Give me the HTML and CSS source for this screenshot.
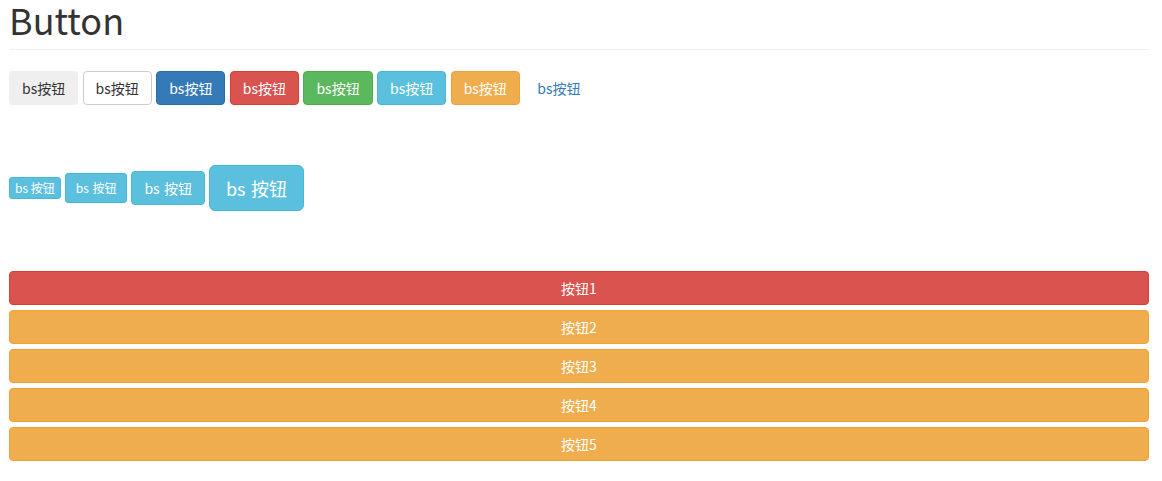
FILE: index.html
```html
<!DOCTYPE html>
<html lang="zh">
<head>
<meta charset="utf-8">
<title>Button</title>
<link rel="stylesheet" href="styles.css">
</head>
<body>
<div class="page">
  <div class="page-header"><h1>Button</h1></div>
  <div class="row row-types">
    <button class="btn">bs按钮</button>
    <button class="btn btn-default">bs按钮</button>
    <button class="btn btn-primary">bs按钮</button>
    <button class="btn btn-danger">bs按钮</button>
    <button class="btn btn-success">bs按钮</button>
    <button class="btn btn-info">bs按钮</button>
    <button class="btn btn-warning">bs按钮</button>
    <button class="btn btn-link">bs按钮</button>
  </div>
  <div class="row row-sizes">
    <button class="btn btn-info btn-xs">bs 按钮</button>
    <button class="btn btn-info btn-sm">bs 按钮</button>
    <button class="btn btn-info">bs 按钮</button>
    <button class="btn btn-info btn-lg">bs 按钮</button>
  </div>
  <div class="blocks">
    <button class="btn btn-danger btn-block">按钮1</button>
    <button class="btn btn-warning btn-block">按钮2</button>
    <button class="btn btn-warning btn-block">按钮3</button>
    <button class="btn btn-warning btn-block">按钮4</button>
    <button class="btn btn-warning btn-block">按钮5</button>
  </div>
</div>
</body>
</html>
```
FILE: styles.css
```css
html, body {
  margin: 0;
  padding: 0;
  background: #fff;
}
body {
  font-family: "Noto Sans CJK SC", "Liberation Sans", sans-serif;
  font-size: 14px;
  line-height: 1.42857;
  color: #333;
}
.page {
  padding: 0 13px 0 9px;
}
.page-header {
  border-bottom: 1px solid #eee;
  padding-bottom: 9px;
}
.page-header h1 {
  margin: 0;
  font-size: 36px;
  font-weight: 400;
  line-height: 39.6px;
  color: #333;
}
.row {
  display: flex;
  align-items: center;
  gap: 4px;
}
.row-types {
  margin-top: 21px;
  gap: 4.4px;
}
.row-sizes {
  margin-top: 60px;
}
.blocks {
  margin-top: 60px;
  display: flex;
  flex-direction: column;
  gap: 5px;
}
.btn {
  display: inline-block;
  font-family: inherit;
  font-size: 14px;
  line-height: 20px;
  padding: 6px 12px;
  border: 1px solid transparent;
  border-radius: 4px;
  background: #efefef;
  color: #333;
  white-space: nowrap;
  text-align: center;
  word-spacing: 0.08em;
  margin: 0;
  cursor: pointer;
}
.btn-default { background: #fff; border-color: #ccc; color: #333; }
.btn-primary { background: #337ab7; border-color: #2e6da4; color: #fff; }
.btn-danger { background: #d9534f; border-color: #d43f3a; color: #fff; }
.btn-success { background: #5cb85c; border-color: #4cae4c; color: #fff; }
.btn-info { background: #5bc0de; border-color: #46b8da; color: #fff; }
.btn-warning { background: #f0ad4e; border-color: #eea236; color: #fff; }
.btn-link { background: transparent; border-color: transparent; color: #337ab7; }
.btn-xs {
  padding: 1px 5px;
  font-size: 12px;
  line-height: 18px;
  border-radius: 3px;
  word-spacing: 0;
}
.btn-sm {
  padding: 5px 10px;
  font-size: 12px;
  line-height: 18px;
  border-radius: 3px;
}
.btn-lg {
  padding: 10px 16px;
  font-size: 18px;
  line-height: 24px;
  border-radius: 6px;
}
.btn-block {
  display: block;
  width: 100%;
}
```
